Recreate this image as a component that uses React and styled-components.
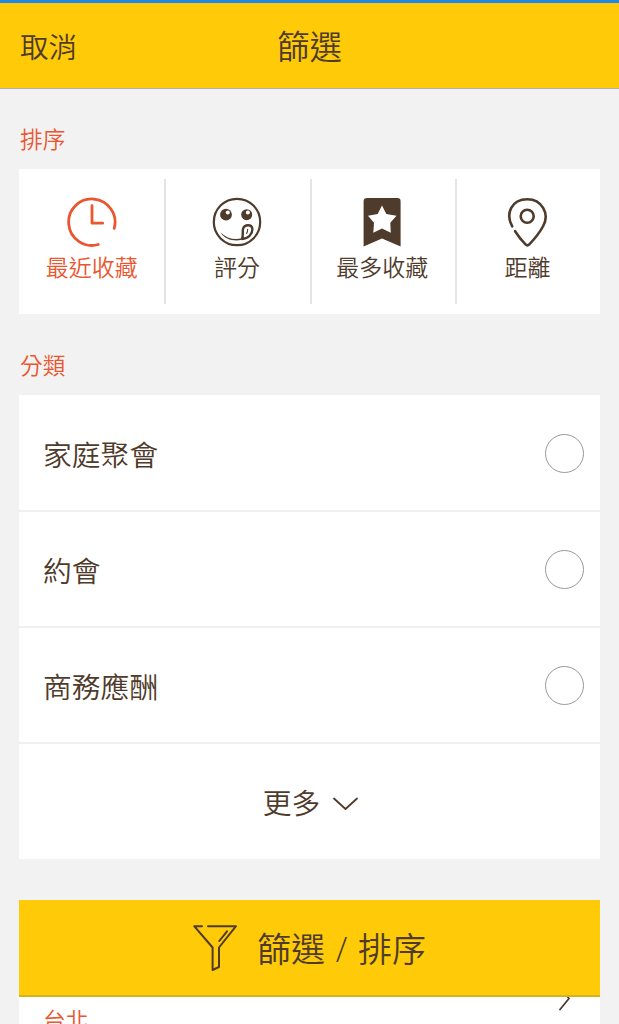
import React from 'react'
import styled, { createGlobalStyle } from 'styled-components'

const brown = '#4f3b2b'
const orange = '#ea5630'
const yellow = '#ffcb08'

const GlobalStyle = createGlobalStyle`
    * {
        box-sizing: border-box;
    }
    body {
        margin: 0;
        background: #f2f2f2;
        color: ${brown};
        font-family: "Noto Sans CJK TC", sans-serif;
        font-weight: 350;
    }
`
const Page = styled.div`
    display: flex;
    flex-direction: column;
    height: 1024px;
    overflow: hidden;
`
const Header = styled.header`
    display: grid;
    grid-template-columns: 1fr auto 1fr;
    align-items: center;
    flex: none;
    height: 89px;
    padding: 0 20px;
    background: ${yellow};
    border-top: 3px solid #1f87e5;
    border-bottom: 1px solid #b0aea6;
`
const Cancel = styled.a`
    font-size: 28.5px;
    line-height: 40px;
`
const Title = styled.h1`
    margin: 0;
    padding-bottom: 2px;
    font-size: 32.5px;
    line-height: 40px;
    font-weight: 350;
`
const SectionName = styled.h2`
    flex: none;
    margin: 0;
    padding: ${props => props.$top}px 20px 0;
    height: ${props => props.$height}px;
    color: ${orange};
    font-size: 22.7px;
    line-height: 32px;
    font-weight: 350;
`
const Card = styled.div`
    flex: none;
    margin: 0 19px;
    background: #fff;
`
const SortCard = styled(Card)`
    display: grid;
    grid-template-columns: repeat(4, 1fr);
    height: 145px;
    padding: 10px 0;
`
const SortItem = styled.div`
    display: flex;
    flex-direction: column;
    align-items: center;
    padding-top: 18px;
    color: ${props => (props.$active ? orange : brown)};
    font-size: 23px;
    line-height: 32px;

    & + & {
        padding-right: 2px;
        border-left: 2px solid #e4e4e4;
    }
    svg {
        flex: none;
        margin-bottom: 3px;
    }
`
const Row = styled.div`
    display: flex;
    align-items: center;
    justify-content: space-between;
    height: 116px;
    padding: 0 16px 0 24px;
    border-top: 2px solid #efefef;
    font-size: 28.8px;
    line-height: 40px;

    &:first-child {
        height: 115px;
        padding-top: 2px;
        border-top: none;
    }
`
const RowName = styled.span`
    padding-top: 1px;
`
const MoreRow = styled(Row)`
    justify-content: center;
    gap: 13px;
    height: 117px;
    padding: 0 0 0 2px;

    svg {
        margin-top: 4px;
    }
`
const Radio = styled.span`
    width: 39px;
    height: 39px;
    border: 1px solid #999;
    border-radius: 50%;
`
const FilterButton = styled.button`
    display: flex;
    align-items: center;
    justify-content: center;
    gap: 20px;
    flex: none;
    height: 97px;
    margin: 41px 19px 0;
    padding: 0;
    border: none;
    border-bottom: 2px solid #d9b01d;
    background: ${yellow};
    color: ${brown};
    font-family: inherit;
    font-size: 34px;
    line-height: 48px;
    font-weight: 350;
    word-spacing: 3px;
`
const Slash = styled.span`
    font-family: "Open Sans", "Noto Sans", sans-serif;
    line-height: 1;
`
const CityCard = styled(Card)`
    display: flex;
    justify-content: space-between;
    height: 27px;
    padding: 0 29px 0 24px;
    overflow: hidden;
    color: ${orange};
    font-size: 22.7px;
    line-height: 32px;
`
const CityName = styled.span`
    padding-top: 7px;
`

const Icon = ({ width = 50, height = 50, stroke = 2.8, children }) => (
    <svg width={width} height={height} viewBox={`0 0 ${width} ${height}`} fill="none"
        stroke="currentColor" strokeWidth={stroke} strokeLinecap="round" strokeLinejoin="round">
        {children}
    </svg>
)

const ClockIcon = () => (
    <Icon>
        <path d="M31.2 47.5A23.2 23.2 0 1 1 47.2 31.4" />
        <path d="M25 8.7V26.2H35.7" />
    </Icon>
)

const FaceIcon = () => (
    <Icon stroke={2.2}>
        <circle cx="25" cy="25" r="23.2" />
        <g stroke="none">
            <circle cx="14" cy="17.7" r="5.9" fill="currentColor" />
            <circle cx="34.7" cy="17.7" r="5.5" fill="currentColor" />
            <circle cx="15.8" cy="15.4" r="2" fill="#fff" />
            <circle cx="35.9" cy="15.4" r="2" fill="#fff" />
            <path d="M8.6 35.4C14 40.8 21 43 29 41.6V43C21 44.4 12.5 42 8.6 35.4Z" fill="currentColor" />
        </g>
        <path d="M30 42C31.6 38.4 30.2 35.2 31 32C32.4 27 40 27 40.4 32.2C40.4 37 36.6 41.6 30 42Z" strokeWidth="2.4" />
        <path d="M35.6 32.4C35.7 34 35.3 35.4 34.6 36.4" strokeWidth="1.1" />
    </Icon>
)

const BookmarkIcon = () => (
    <Icon>
        <path stroke="none" fill="currentColor" fillRule="evenodd"
            d="M10.2 1H40.4Q43.6 1 43.6 4.2V49.5L25 41.5L6.6 49.5V4.2Q6.6 1 10.2 1ZM25 8.4L20.7 17L11 18.8L17 25.7L16.3 35.8L25 31.5L33.8 35.8L33.3 25.7L39.5 18.8L29.3 17Z" />
    </Icon>
)

const PinIcon = () => (
    <Icon stroke={2.6}>
        <path d="M10.2 29.3C3.4 17 9 2.2 25.4 2.2C39.5 2.2 48 16.5 41.2 29C37 36.8 32.3 42.2 27.3 47.4Q25.4 49.3 23.5 47.4C19.4 43.2 16.2 39 13.1 34.2" />
        <circle cx="25.2" cy="19.3" r="6.5" />
    </Icon>
)

const FunnelIcon = () => (
    <Icon width={44} height={48} stroke={2}>
        <path d="M9 2.2H1.2L19.6 23.5V46L26 43V23.5L43 2.2H15" />
        <path d="M34 7.3L26.3 17" />
    </Icon>
)

const sorts = [
    { name: '最近收藏', icon: <ClockIcon />, active: true },
    { name: '評分', icon: <FaceIcon /> },
    { name: '最多收藏', icon: <BookmarkIcon /> },
    { name: '距離', icon: <PinIcon /> },
]
const categories = ['家庭聚會', '約會', '商務應酬']

const App = () => (
    <Page>
        <GlobalStyle />
        <Header>
            <Cancel>取消</Cancel>
            <Title>篩選</Title>
        </Header>
        <SectionName $top={34} $height={80}>排序</SectionName>
        <SortCard>
            {sorts.map(sort => (
                <SortItem key={sort.name} $active={sort.active}>
                    {sort.icon}
                    {sort.name}
                </SortItem>
            ))}
        </SortCard>
        <SectionName $top={35} $height={81}>分類</SectionName>
        <Card>
            {categories.map(name => (
                <Row key={name}>
                    <RowName>{name}</RowName>
                    <Radio />
                </Row>
            ))}
            <MoreRow>
                更多
                <Icon width={25} height={14} stroke={1.8}>
                    <path d="M1 1.5L12.5 12L24 1.5" />
                </Icon>
            </MoreRow>
        </Card>
        <FilterButton>
            <FunnelIcon />
            <span>篩選 <Slash>/</Slash> 排序</span>
        </FilterButton>
        <CityCard>
            <CityName>台北</CityName>
            <Icon width={13} height={14} stroke={1.8}>
                <path d="M2 -10L11 1.5L2 12.5" stroke={brown} />
            </Icon>
        </CityCard>
    </Page>
)

export default App
